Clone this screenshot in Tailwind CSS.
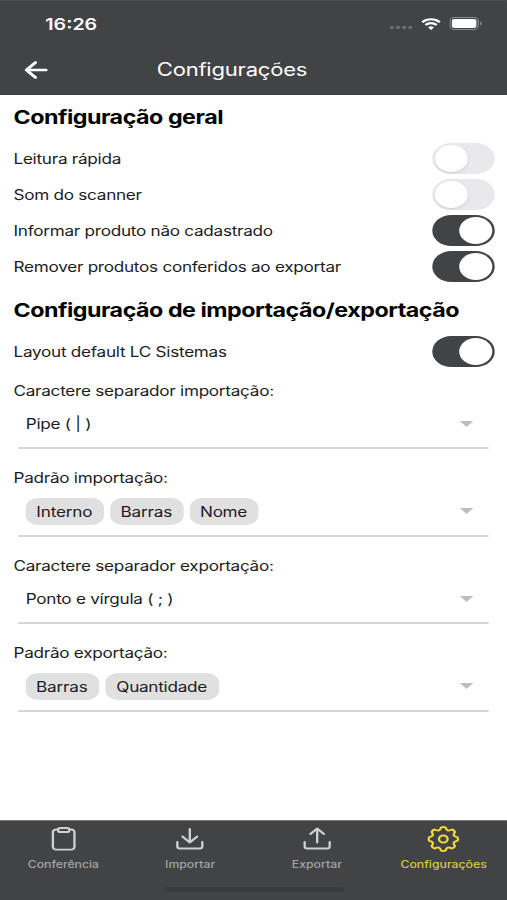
<!DOCTYPE html>
<html lang="pt-BR">
  <head>
    <meta charset="UTF-8" />
    <meta name="viewport" content="width=device-width, initial-scale=1.0" />
    <title>Configurações</title>
    <script src="https://cdn.jsdelivr.net/npm/@tailwindcss/browser@4"></script>
  </head>

  <body class="h-[900px] overflow-hidden bg-white">
    <!-- 414pt wide phone layout, stretched to the window width -->
    <div class="flex flex-col w-[414px] h-[900px] origin-top-left scale-x-[1.2246] bg-white text-[#1c1c1e] font-['Inter','Liberation_Sans',sans-serif]">
      <header class="h-[95px] shrink-0 bg-[#424345] text-white border-t border-[#4d4e50]">
        <div class="flex items-center justify-between h-[45px] pl-9 pr-[20px]">
          <span class="pl-px text-[16px] font-semibold">16:26</span>
          <div class="flex items-center">
            <svg class="w-[19px] h-[5px] mt-2 mr-[7px]" viewBox="0 0 19 5" fill="#6d6e70">
              <circle cx="2" cy="2.5" r="1.7" />
              <circle cx="7" cy="2.5" r="1.7" />
              <circle cx="12" cy="2.5" r="1.7" />
              <circle cx="17" cy="2.5" r="1.7" />
            </svg>
            <svg class="w-4 h-3 mr-[7px]" viewBox="0 0 16 12" fill="none" stroke="#fff" stroke-width="2.1">
              <path d="M.8 4.2a10.2 10.2 0 0 1 14.4 0" />
              <path d="M3.4 7a6.5 6.5 0 0 1 9.2 0" />
              <path d="M8 12 5.6 9.500a3.4 3.4 0 0 1 4.8 0z" fill="#fff" stroke="none" />
            </svg>
            <svg class="w-[27px] h-[13px]" viewBox="0 0 27 13">
              <rect x=".5" y=".5" width="23" height="12" rx="3.6" fill="none" stroke="#8b8c8e" />
              <rect x="2" y="2" width="20" height="9" rx="2.2" fill="#fff" />
              <path d="M25 4.500v4c1.800-.6 1.800-3.400 0-4z" fill="#8b8c8e" />
            </svg>
          </div>
        </div>
        <div class="flex items-center h-[47px] pl-5">
          <svg class="w-[19px] h-[18px]" viewBox="0 0 19 18" fill="none" stroke="#fff" stroke-width="2.5" stroke-linecap="round" stroke-linejoin="round">
            <path d="M9 1.500 1.500 9 9 16.500M1.500 9H17.700" />
          </svg>
          <h1 class="ml-[89px] text-[18px] tracking-[-0.18px]">Configurações</h1>
        </div>
      </header>

      <main class="flex-1 pl-[11px] pr-[10px] text-[14px] tracking-[-0.22px]">
        <h2 class="flex items-center h-[45px] pt-0.5 text-[19px] tracking-[-0.4px] font-bold text-black">Configuração geral</h2>
        <div class="flex items-center justify-between h-9">
          <span>Leitura rápida</span>
          <span class="w-[51px] h-[31px] p-[2px] rounded-full bg-[#e9e9eb]"><span class="block size-[27px] rounded-full bg-white shadow-sm"></span></span>
        </div>
        <div class="flex items-center justify-between h-9">
          <span>Som do scanner</span>
          <span class="w-[51px] h-[31px] p-[2px] rounded-full bg-[#e9e9eb]"><span class="block size-[27px] rounded-full bg-white shadow-sm"></span></span>
        </div>
        <div class="flex items-center justify-between h-9">
          <span>Informar produto não cadastrado</span>
          <span class="w-[51px] h-[31px] p-[2px] rounded-full bg-[#424345]"><span class="block size-[27px] ml-auto rounded-full bg-white"></span></span>
        </div>
        <div class="flex items-center justify-between h-[37px]">
          <span>Remover produtos conferidos ao exportar</span>
          <span class="w-[51px] h-[31px] p-[2px] rounded-full bg-[#424345]"><span class="block size-[27px] ml-auto rounded-full bg-white"></span></span>
        </div>

        <h2 class="flex items-center h-12 pt-1 text-[19px] tracking-[-0.4px] font-bold text-black">Configuração de importação/exportação</h2>
        <div class="flex items-center justify-between h-9">
          <span>Layout default LC Sistemas</span>
          <span class="w-[51px] h-[31px] p-[2px] rounded-full bg-[#424345]"><span class="block size-[27px] ml-auto rounded-full bg-white"></span></span>
        </div>

        <div class="h-[87px] mt-1.5">
          <p class="flex items-center h-8 pb-0.5">Caractere separador importação:</p>
          <div class="flex items-center justify-between h-[42px] ml-1 mr-[5px] pl-1.5 pr-3 pb-[7px] border-b-2 border-[#d6d6d6]">
            <span>Pipe ( | )</span>
            <svg class="w-3 h-1.5" viewBox="0 0 12 6" fill="#bdbdbd"><path d="M.5 0h11L6 6z" /></svg>
          </div>
        </div>
        <div class="h-[88px]">
          <p class="flex items-center h-8 pb-px">Padrão importação:</p>
          <div class="flex items-center justify-between h-[43px] ml-1 mr-[5px] pl-[5.5px] pr-3 pb-[7px] border-b-2 border-[#d6d6d6]">
            <div class="flex gap-[5px]">
              <span class="flex items-center justify-center w-16 h-[27px] rounded-[10px] bg-[#e0e0e0] tracking-[-0.15px]">Interno</span>
              <span class="flex items-center justify-center w-[60px] h-[27px] rounded-[10px] bg-[#e0e0e0] tracking-[-0.15px]">Barras</span>
              <span class="flex items-center justify-center w-[56px] h-[27px] rounded-[10px] bg-[#e0e0e0] tracking-[-0.3px]">Nome</span>
            </div>
            <svg class="w-3 h-1.5" viewBox="0 0 12 6" fill="#bdbdbd"><path d="M.5 0h11L6 6z" /></svg>
          </div>
        </div>
        <div class="h-[87px]">
          <p class="flex items-center h-8 pb-0.5">Caractere separador exportação:</p>
          <div class="flex items-center justify-between h-[42px] ml-1 mr-[5px] pl-1.5 pr-3 pb-[7px] border-b-2 border-[#d6d6d6]">
            <span>Ponto e vírgula ( ; )</span>
            <svg class="w-3 h-1.5" viewBox="0 0 12 6" fill="#bdbdbd"><path d="M.5 0h11L6 6z" /></svg>
          </div>
        </div>
        <div class="h-[88px]">
          <p class="flex items-center h-8 pb-0.5">Padrão exportação:</p>
          <div class="flex items-center justify-between h-[43px] ml-1 mr-[5px] pl-[5.5px] pr-3 pb-[7px] border-b-2 border-[#d6d6d6]">
            <div class="flex gap-[5px]">
              <span class="flex items-center justify-center w-[60px] h-[27px] rounded-[10px] bg-[#e0e0e0] tracking-[-0.15px]">Barras</span>
              <span class="flex items-center justify-center w-[93px] h-[27px] rounded-[10px] bg-[#e0e0e0]">Quantidade</span>
            </div>
            <svg class="w-3 h-1.5" viewBox="0 0 12 6" fill="#bdbdbd"><path d="M.5 0h11L6 6z" /></svg>
          </div>
        </div>
      </main>

      <footer class="flex flex-col items-center h-20 shrink-0 bg-[#424345] border-t border-[#77787a]">
        <nav class="grid grid-cols-4 w-full pt-[5px] text-[10px] font-medium text-[#a2a3a5]">
          <a class="flex flex-col items-center gap-[5px]">
            <svg class="size-[26px]" viewBox="0 0 26 26" fill="none" stroke="#cfd0d1" stroke-width="1.9" stroke-linejoin="round">
              <path d="M9 3.500H6.800a2.600 2.600 0 0 0-2.600 2.600V21a2.600 2.600 0 0 0 2.600 2.600h12.400A2.600 2.600 0 0 0 21.800 21V6.100a2.600 2.600 0 0 0-2.600-2.600H17" />
              <rect x="8.500" y="2" width="9" height="4" rx="1.600" />
            </svg>
            <span>Conferência</span>
          </a>
          <a class="flex flex-col items-center gap-[5px]">
            <svg class="size-[26px]" viewBox="0 0 26 26" fill="none" stroke="#cfd0d1" stroke-width="1.9" stroke-linecap="round" stroke-linejoin="round">
              <path d="M13 3v13.500M7 10.500l6 6 6-6M2.800 16v4.500a2 2 0 0 0 2 2h16.400a2 2 0 0 0 2-2V16" />
            </svg>
            <span>Importar</span>
          </a>
          <a class="flex flex-col items-center gap-[5px]">
            <svg class="size-[26px]" viewBox="0 0 26 26" fill="none" stroke="#cfd0d1" stroke-width="1.9" stroke-linecap="round" stroke-linejoin="round">
              <path d="M13 16.500V3M7.500 8 13 2.500 18.500 8M2.800 16v4.500a2 2 0 0 0 2 2h16.400a2 2 0 0 0 2-2V16" />
            </svg>
            <span>Exportar</span>
          </a>
          <a class="flex flex-col items-center gap-[5px] text-[#d9c746]">
            <svg class="size-[26px]" viewBox="-13 -13 26 26" fill="none" stroke="#f0da3c" stroke-width="1.9" stroke-linejoin="round">
              <path d="M11.500-1.880Q12.500 0 11.500 1.880Q6.800 2.800 9.500 7Q9 9 7 9.500Q2.800 6.800 1.880 11.500Q0 12.500-1.880 11.500Q-2.800 6.800-7 9.500Q-9 9-9.500 7Q-6.800 2.800-11.500 1.880Q-12.500 0-11.500-1.880Q-6.800-2.800-9.500-7Q-9-9-7-9.500Q-2.800-6.800-1.880-11.500Q0-12.500 1.880-11.500Q2.800-6.800 7-9.500Q9-9 9.500-7Q6.800-2.800 11.500-1.880z" />
              <circle r="3.500" />
            </svg>
            <span>Configurações</span>
          </a>
        </nav>
        <div class="w-[147px] h-[5px] mt-auto mb-2 rounded-full bg-[#3a3b3c]"></div>
      </footer>
    </div>
  </body>
</html>
